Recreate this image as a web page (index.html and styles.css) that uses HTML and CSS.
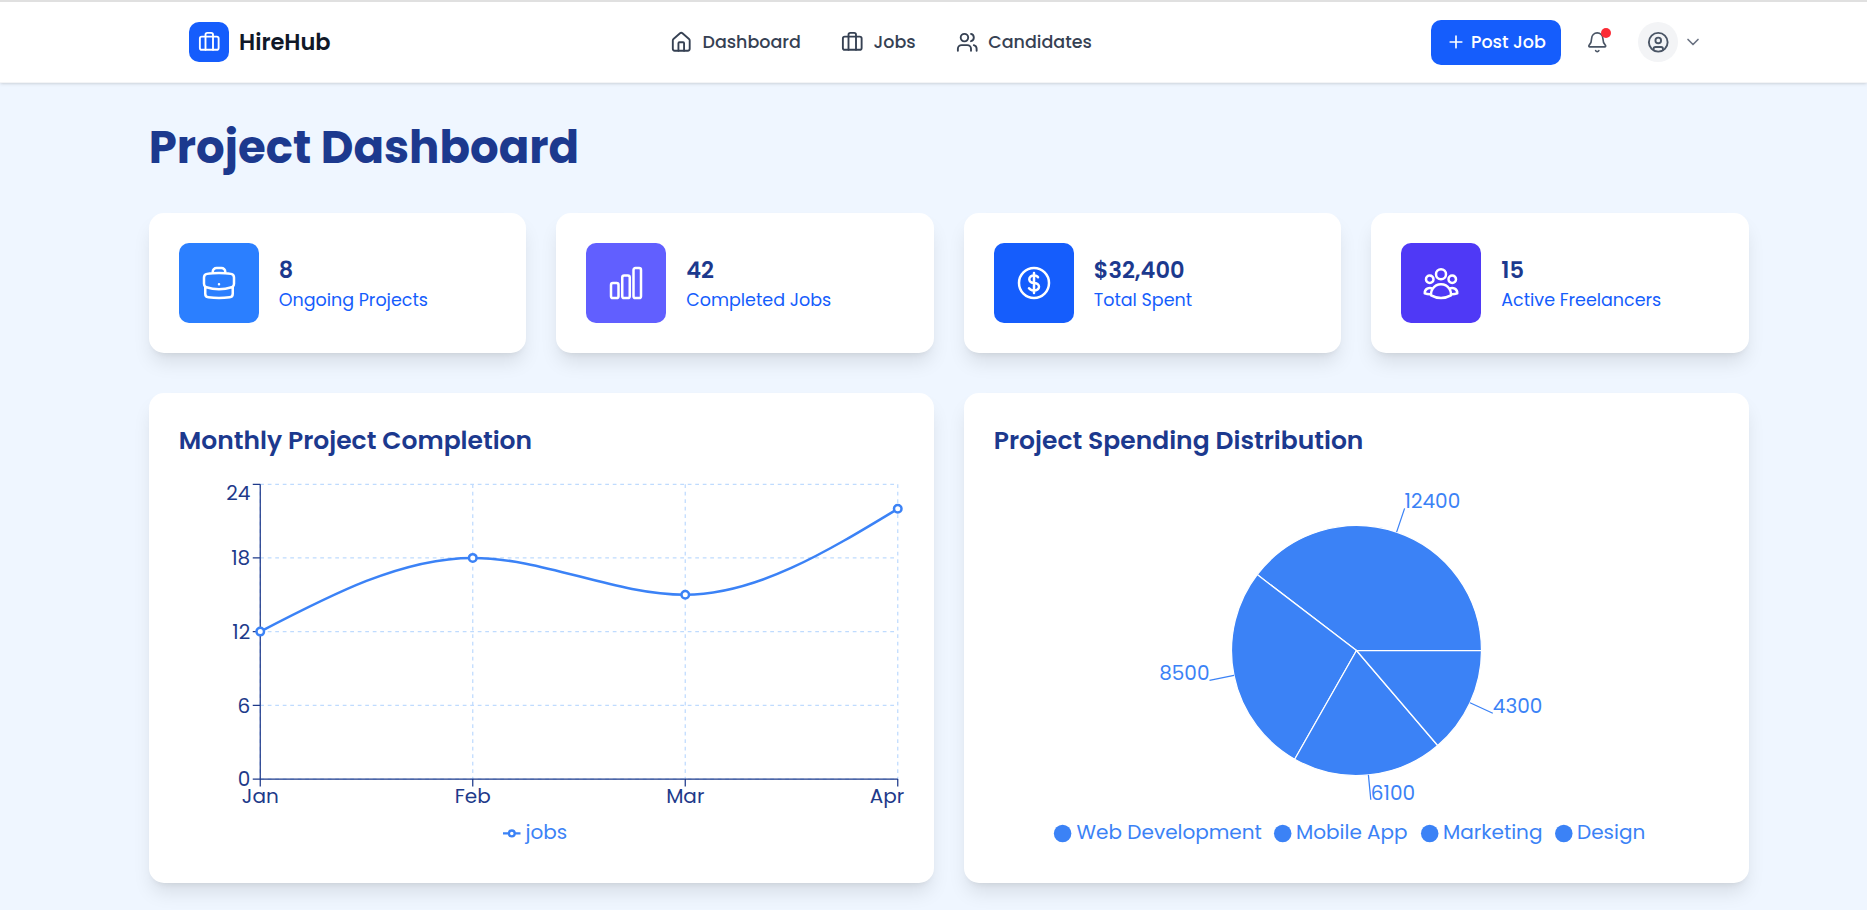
FILE: index.html
```html
<!DOCTYPE html>
<html lang="en">
<head>
<meta charset="utf-8">
<title>HireHub</title>
<link rel="stylesheet" href="styles.css">
</head>
<body>
<header class="topbar">
  <div class="brand">
    <span class="brand-mark"><svg class="icon" viewBox="0 0 24 24"><rect x="2" y="6" width="20" height="14" rx="2"/><path d="M16 20V4a2 2 0 0 0-2-2h-4a2 2 0 0 0-2 2v16"/></svg></span>
    <span class="brand-name">HireHub</span>
  </div>
  <nav class="nav">
    <a class="nav-link"><svg class="icon" viewBox="0 0 24 24"><path d="M15 21v-8a1 1 0 0 0-1-1h-4a1 1 0 0 0-1 1v8"/><path d="M3 10a2 2 0 0 1 .709-1.528l7-5.999a2 2 0 0 1 2.582 0l7 5.999A2 2 0 0 1 21 10v9a2 2 0 0 1-2 2H5a2 2 0 0 1-2-2z"/></svg><span>Dashboard</span></a>
    <a class="nav-link"><svg class="icon" viewBox="0 0 24 24"><rect x="2" y="6" width="20" height="14" rx="2"/><path d="M16 20V4a2 2 0 0 0-2-2h-4a2 2 0 0 0-2 2v16"/></svg><span>Jobs</span></a>
    <a class="nav-link"><svg class="icon" viewBox="0 0 24 24"><path d="M16 21v-2a4 4 0 0 0-4-4H6a4 4 0 0 0-4 4v2"/><circle cx="9" cy="7" r="4"/><path d="M22 21v-2a4 4 0 0 0-3-3.87M16 3.13a4 4 0 0 1 0 7.75"/></svg><span>Candidates</span></a>
  </nav>
  <div class="actions">
    <button class="post"><svg class="icon icon-sm" viewBox="0 0 24 24"><path d="M5 12h14M12 5v14"/></svg><span>Post Job</span></button>
    <span class="bell"><svg class="icon" viewBox="0 0 24 24"><path d="M10.268 21a2 2 0 0 0 3.464 0"/><path d="M3.262 15.326A1 1 0 0 0 4 17h16a1 1 0 0 0 .74-1.673C19.41 13.956 18 12.499 18 8A6 6 0 0 0 6 8c0 4.499-1.411 5.956-2.738 7.326"/></svg><i class="bell-dot"></i></span>
    <span class="avatar"><svg class="icon" viewBox="0 0 24 24"><circle cx="12" cy="12" r="10"/><circle cx="12" cy="10" r="3"/><path d="M7 20.662V19a2 2 0 0 1 2-2h6a2 2 0 0 1 2 2v1.662"/></svg></span>
    <svg class="icon icon-sm chevron" viewBox="0 0 24 24"><path d="m6 9 6 6 6-6"/></svg>
  </div>
</header>
<main class="page">
  <h1 class="title">Project Dashboard</h1>
  <section class="stats">
    <article class="card stat">
      <span class="tile tile-blue"><svg class="glyph" viewBox="0 0 24 24"><path d="M20.25 14.15v4.25c0 1.094-.787 2.036-1.872 2.18-2.087.277-4.216.42-6.378.42s-4.291-.143-6.378-.42c-1.085-.144-1.872-1.086-1.872-2.18v-4.25m16.5 0a2.18 2.18 0 0 0 .75-1.661V8.706c0-1.081-.768-2.015-1.837-2.175a48.114 48.114 0 0 0-3.413-.387m4.5 8.006c-.194.165-.42.295-.673.38A23.978 23.978 0 0 1 12 15.75c-2.648 0-5.195-.429-7.577-1.22a2.016 2.016 0 0 1-.673-.38m0 0A2.18 2.18 0 0 1 3 12.489V8.706c0-1.081.768-2.015 1.837-2.175a48.111 48.111 0 0 1 3.413-.387m7.5 0V5.25A2.25 2.25 0 0 0 13.5 3h-3a2.25 2.25 0 0 0-2.25 2.25v.894m7.5 0a48.667 48.667 0 0 0-7.5 0M12 12.75h.008v.008H12v-.008Z"/></svg></span>
      <div class="stat-text"><b class="value">8</b><span class="label">Ongoing Projects</span></div>
    </article>
    <article class="card stat">
      <span class="tile tile-indigo"><svg class="glyph" viewBox="0 0 24 24"><path d="M3 13.125C3 12.504 3.504 12 4.125 12h2.25c.621 0 1.125.504 1.125 1.125v6.75C7.5 20.496 6.996 21 6.375 21h-2.25A1.125 1.125 0 0 1 3 19.875v-6.75ZM9.75 8.625c0-.621.504-1.125 1.125-1.125h2.25c.621 0 1.125.504 1.125 1.125v11.25c0 .621-.504 1.125-1.125 1.125h-2.25a1.125 1.125 0 0 1-1.125-1.125V8.625ZM16.5 4.125c0-.621.504-1.125 1.125-1.125h2.25C20.496 3 21 3.504 21 4.125v15.75c0 .621-.504 1.125-1.125 1.125h-2.25a1.125 1.125 0 0 1-1.125-1.125V4.125Z"/></svg></span>
      <div class="stat-text"><b class="value">42</b><span class="label">Completed Jobs</span></div>
    </article>
    <article class="card stat">
      <span class="tile tile-royal"><svg class="glyph" viewBox="0 0 24 24"><path d="M12 6v12m-3-2.818.879.659c1.171.879 3.07.879 4.242 0 1.172-.879 1.172-2.303 0-3.182C13.536 12.219 12.768 12 12 12c-.725 0-1.45-.22-2.003-.659-1.106-.879-1.106-2.303 0-3.182s2.9-.879 4.006 0l.415.33M21 12a9 9 0 1 1-18 0 9 9 0 0 1 18 0Z"/></svg></span>
      <div class="stat-text"><b class="value">$32,400</b><span class="label">Total Spent</span></div>
    </article>
    <article class="card stat">
      <span class="tile tile-violet"><svg class="glyph" viewBox="0 0 24 24"><path d="M18 18.72a9.094 9.094 0 0 0 3.741-.479 3 3 0 0 0-4.682-2.72m.94 3.198.001.031c0 .225-.012.447-.037.666A11.944 11.944 0 0 1 12 21c-2.17 0-4.207-.576-5.963-1.584A6.062 6.062 0 0 1 6 18.719m12 0a5.971 5.971 0 0 0-.941-3.197m0 0A5.995 5.995 0 0 0 12 12.75a5.995 5.995 0 0 0-5.058 2.772m0 0a3 3 0 0 0-4.681 2.72 8.986 8.986 0 0 0 3.74.477m.94-3.197a5.971 5.971 0 0 0-.94 3.197M15 6.75a3 3 0 1 1-6 0 3 3 0 0 1 6 0Zm6 3a2.25 2.25 0 1 1-4.5 0 2.25 2.25 0 0 1 4.5 0Zm-13.5 0a2.25 2.25 0 1 1-4.5 0 2.25 2.25 0 0 1 4.5 0Z"/></svg></span>
      <div class="stat-text"><b class="value">15</b><span class="label">Active Freelancers</span></div>
    </article>
  </section>
  <section class="charts">
    <article class="card panel">
      <h2 class="panel-title">Monthly Project Completion</h2>
      <svg class="chart" viewBox="0 0 725 375">
        <g class="grid">
          <path d="M81.25 6.25H718.75M81.25 79.9H718.75M81.25 153.6H718.75M81.25 227.3H718.75M81.25 301H718.75"/>
          <path d="M81.25 6.25V301M293.75 6.25V301M506.25 6.25V301M718.75 6.25V301"/>
        </g>
        <path class="axis" d="M81.25 6.25V301H718.75M73.75 6.25h7.5M73.75 79.9h7.5M73.75 153.6h7.5M73.75 227.3h7.5M73.75 301h7.5M81.25 301v7.5M293.75 301v7.5M506.25 301v7.5M718.75 301v7.5"/>
        <g class="tick tick-y">
          <text x="71.25" y="22">24</text>
          <text x="71.25" y="87">18</text>
          <text x="71.25" y="160.7">12</text>
          <text x="71.25" y="234.5">6</text>
          <text x="71.25" y="308">0</text>
        </g>
        <g class="tick tick-x">
          <text x="81.25" y="325">Jan</text>
          <text x="293.75" y="325">Feb</text>
          <text x="506.25" y="325">Mar</text>
          <text x="708" y="325">Apr</text>
        </g>
        <path class="line" d="M81.25 153.6C152.08 116.7 222.92 79.9 293.75 79.9C364.58 79.9 435.42 116.7 506.25 116.7C577.08 116.7 647.92 73.7 718.75 30.8"/>
        <g class="dots"><circle cx="81.25" cy="153.6" r="3.75"/><circle cx="293.75" cy="79.9" r="3.75"/><circle cx="506.25" cy="116.7" r="3.75"/><circle cx="718.75" cy="30.8" r="3.75"/></g>
        <path class="key" d="M324 355.4h5.8M335.7 355.4h5.8"/><circle class="key" cx="332.8" cy="355.4" r="2.9"/>
        <text class="legend" x="346.5" y="361">jobs</text>
      </svg>
    </article>
    <article class="card panel">
      <h2 class="panel-title">Project Spending Distribution</h2>
      <svg class="chart" viewBox="0 0 725 375">
        <g class="slices">
          <path d="M362.5 172.5L487.5 172.5A125 125 0 0 0 263.2 96.6Z"/>
          <path d="M362.5 172.5L263.2 96.6A125 125 0 0 0 300.7 281.2Z"/>
          <path d="M362.5 172.5L300.7 281.2A125 125 0 0 0 443.7 267.5Z"/>
          <path d="M362.5 172.5L443.7 267.5A125 125 0 0 0 487.5 172.5Z"/>
        </g>
        <path class="leader" d="M402.6 54.1L410.6 30.4M240 197.4L215.5 202.4M374.4 296.9L376.8 321.8M476 224.8L498.8 235.3"/>
        <g class="legend">
          <text x="410.6" y="30.4">12400</text>
          <text x="215.5" y="202.4" text-anchor="end">8500</text>
          <text x="498.8" y="235.3">4300</text>
          <text x="376.8" y="321.8">6100</text>
          <circle cx="68.6" cy="355.5" r="8.75"/><text x="82.6" y="361">Web Development</text>
          <circle cx="288.7" cy="355.5" r="8.75"/><text x="302" y="361">Mobile App</text>
          <circle cx="435.7" cy="355.5" r="8.75"/><text x="449" y="361">Marketing</text>
          <circle cx="569.8" cy="355.5" r="8.75"/><text x="583" y="361">Design</text>
        </g>
      </svg>
    </article>
  </section>
</main>
</body>
</html>
```
FILE: styles.css
```css
* { box-sizing: border-box; }
body {
  margin: 0;
  background: #eff6ff;
  font-family: Poppins, Inter, "Open Sans", sans-serif;
  height: 910px;
  overflow: hidden;
}
.topbar {
  display: flex;
  align-items: center;
  height: 83px;
  padding: 0 163.7px 0 189px;
  background: #fff;
  border-top: 2px solid #e0e0e0;
  border-bottom: 1px solid #f3f4f6;
  box-shadow: 0 1.25px 3.75px rgba(0, 0, 0, .1), 0 1.25px 2.5px -1px rgba(0, 0, 0, .1);
}
.icon {
  display: block;
  flex: none;
  width: 22.5px;
  height: 22.5px;
  fill: none;
  stroke: currentColor;
  stroke-width: 2;
  stroke-linecap: round;
  stroke-linejoin: round;
}
.icon-sm { width: 20px; height: 20px; }
.brand { display: flex; align-items: center; gap: 10px; width: 481px; }
.brand-mark {
  display: grid;
  place-items: center;
  width: 40px;
  height: 40px;
  border-radius: 10px;
  background: #155dfc;
  color: #fff;
}
.brand-name { font-size: 22.5px; font-weight: 600; color: #101828; }
.nav { display: flex; gap: 40px; }
.nav-link {
  display: flex;
  align-items: center;
  gap: 10px;
  color: #364153;
  font-size: 17.5px;
  font-weight: 500;
}
.actions { display: flex; align-items: center; margin-left: auto; }
.post {
  display: flex;
  align-items: center;
  gap: 5px;
  width: 130px;
  height: 45px;
  padding: 0 0 0 15px;
  border: 0;
  border-radius: 10px;
  background: #155dfc;
  color: #fff;
  font: inherit;
  font-size: 17.5px;
  font-weight: 500;
  white-space: nowrap;
}
.bell { position: relative; margin-left: 25px; color: #4a5565; }
.bell .icon { stroke-width: 1.75; }
.bell-dot {
  position: absolute;
  top: -2.75px;
  right: -2.5px;
  width: 10px;
  height: 10px;
  border-radius: 50%;
  background: #fb2c36;
}
.avatar {
  display: grid;
  place-items: center;
  width: 40px;
  height: 40px;
  margin-left: 29.5px;
  border-radius: 50%;
  background: #f3f4f6;
  color: #4a5565;
}
.chevron { margin-left: 5.3px; color: #6a7282; }
.page { width: 1600px; margin-left: 148.75px; padding-top: 40px; }
.title {
  height: 50px;
  margin: 0 0 40px;
  color: #1c398e;
  font-size: 45px;
  font-weight: 700;
  line-height: 50px;
  white-space: nowrap;
}
.card {
  border-radius: 15px;
  background: #fff;
  box-shadow: 0 12.5px 18.75px -3.75px rgba(0, 0, 0, .1), 0 5px 7.5px -5px rgba(0, 0, 0, .1);
}
.stats { display: grid; grid-template-columns: repeat(4, 1fr); gap: 30px; }
.stat { display: flex; align-items: center; gap: 20px; height: 140px; padding: 30px; }
.tile {
  display: grid;
  place-items: center;
  flex: none;
  width: 80px;
  height: 80px;
  border-radius: 10px;
}
.tile-blue { background: #2b7fff; }
.tile-indigo { background: #615fff; }
.tile-royal { background: #155dfc; }
.tile-violet { background: #4f39f6; }
.glyph {
  width: 40px;
  height: 40px;
  fill: none;
  stroke: #fff;
  stroke-width: 1.5;
  stroke-linecap: round;
  stroke-linejoin: round;
}
.stat-text { display: flex; flex-direction: column; white-space: nowrap; }
.value { color: #1c398e; font-size: 22.5px; font-weight: 600; line-height: 35px; }
.label { color: #155dfc; font-size: 17.5px; line-height: 25px; }
.charts { display: grid; grid-template-columns: 1fr 1fr; gap: 30px; margin-top: 40px; }
.panel { height: 490px; padding: 30px; }
.panel-title {
  height: 35px;
  margin: 0 0 20px;
  color: #1c398e;
  font-size: 25px;
  font-weight: 600;
  line-height: 35px;
  white-space: nowrap;
}
.chart { display: block; width: 725px; height: 375px; overflow: visible; font-size: 20px; }
.grid path { fill: none; stroke: #bfdbfe; stroke-width: 1.25; stroke-dasharray: 3.75 3.75; }
.axis { fill: none; stroke: #1e3a8a; stroke-width: 1.25; }
.tick { fill: #1e3a8a; }
.tick-y { text-anchor: end; }
.tick-x { text-anchor: middle; }
.line { fill: none; stroke: #3b82f6; stroke-width: 2.5; }
.dots circle { fill: #fff; stroke: #3b82f6; stroke-width: 2.5; }
.key { fill: none; stroke: #3b82f6; stroke-width: 2.3; }
.legend { fill: #3b82f6; }
.slices path { fill: #3b82f6; stroke: #fff; stroke-width: 1.25; }
.leader { fill: none; stroke: #3b82f6; stroke-width: 1.25; }
```
